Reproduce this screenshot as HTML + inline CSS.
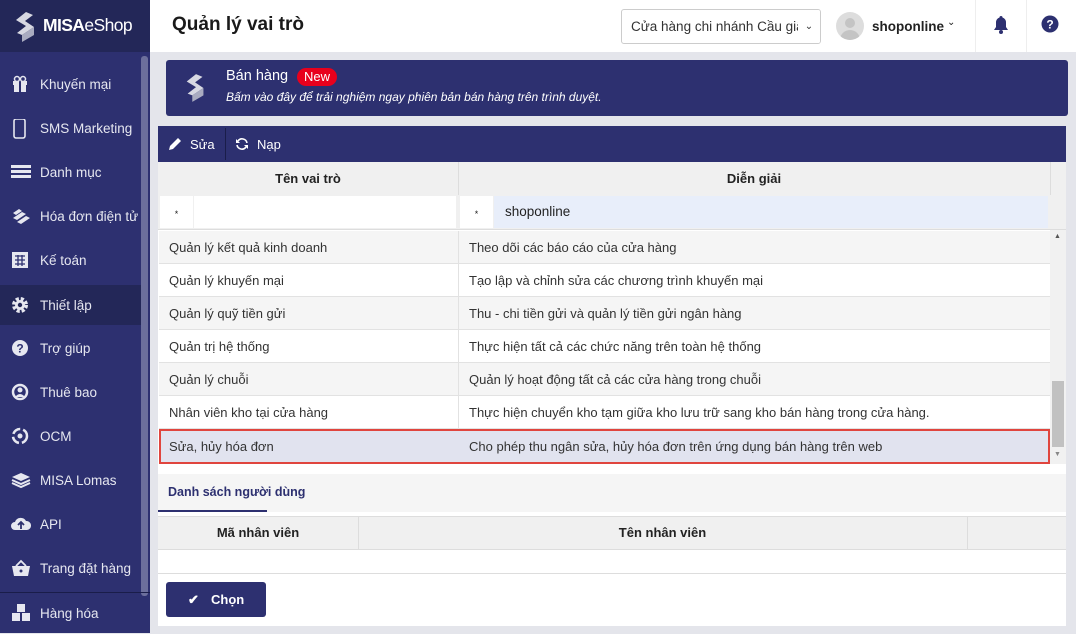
<!DOCTYPE html>
<html><head><meta charset="utf-8"><style>
*{box-sizing:border-box;margin:0;padding:0}
body{width:1076px;height:633px;overflow:hidden;font-family:"Liberation Sans",sans-serif;font-size:13px;color:#222;background:#e4e5eb;position:relative}
.abs{position:absolute}
#side{left:0;top:0;width:150px;height:633px;background:#2d3070}
#logo{left:0;top:0;width:150px;height:52px;background:#232758}
.mi{position:absolute;left:0;width:141px;height:40px;color:#e6e7f0;font-size:13.5px;line-height:41px;padding-left:40px}
.mi svg{position:absolute;left:11px;top:11px}
#hdr{left:150px;top:0;width:926px;height:52px;background:#fff}
.row{position:absolute;left:159px;width:891px;height:33px;border-bottom:1px solid #e2e2e2;font-size:13px;line-height:34px;color:#333}
.row span{position:absolute;left:10px}
.row b{position:absolute;left:310px;font-weight:normal}
.row i{position:absolute;left:299px;top:0;height:33px;border-left:1px solid #e2e2e2}
</style></head><body>
<div id="side" class="abs">
 <div id="logo" class="abs">
  <svg class="abs" style="left:12px;top:11px" width="28" height="32" viewBox="0 0 28 32"><path d="M14 1L4 9l10 6-9 7 5 2 12-8-9-6 8-6z" fill="#d7d8e2"/><path d="M10 24l12-8v8L10 31z" fill="#a9abc0"/></svg>
  <div class="abs" style="left:43px;top:15px;color:#fff;font-size:17.5px;letter-spacing:-0.6px"><b>MISA</b>eShop</div>
 </div>
 <div class="abs" style="left:141px;top:56px;width:7px;height:540px;background:#6c6f9c;border-radius:3px"></div>
 <div class="mi" style="top:64px"><svg width="18" height="18"><rect x="2" y="6" width="14" height="4" fill="#e6e7f0"/><rect x="3" y="10" width="12" height="7" fill="#e6e7f0"/><rect x="8" y="6" width="2" height="11" fill="#2d3070"/><circle cx="6" cy="4" r="2.5" fill="none" stroke="#e6e7f0" stroke-width="1.5"/><circle cx="12" cy="4" r="2.5" fill="none" stroke="#e6e7f0" stroke-width="1.5"/></svg>Khuyến mại</div>
 <div class="mi" style="top:108px"><svg width="18" height="20"><rect x="3" y="0" width="11" height="19" rx="2" fill="none" stroke="#e6e7f0" stroke-width="1.6"/></svg>SMS Marketing</div>
 <div class="mi" style="top:152px"><svg width="20" height="18"><rect x="0" y="2" width="20" height="3" fill="#e6e7f0"/><rect x="0" y="7" width="20" height="3" fill="#e6e7f0"/><rect x="0" y="12" width="20" height="3" fill="#e6e7f0"/></svg>Danh mục</div>
 <div class="mi" style="top:196px"><svg width="20" height="18"><path d="M2 6l6-4 3 2-6 4zM2 11l9-6 4 2-9 6zM6 15l9-6 4 2-9 6z" fill="#e6e7f0"/></svg>Hóa đơn điện tử</div>
 <div class="mi" style="top:240px"><svg width="18" height="18"><rect x="1" y="1" width="16" height="16" fill="#e6e7f0"/><path d="M4 5h10M4 9h10M4 13h10M7 4v11M11 4v11" stroke="#2d3070" stroke-width="1.3"/></svg>Kế toán</div>
 <div class="mi" style="top:285px;background:#232758;width:141px"><svg width="18" height="18"><circle cx="9" cy="9" r="6" fill="none" stroke="#e6e7f0" stroke-width="4" stroke-dasharray="3 1.8"/><circle cx="9" cy="9" r="5" fill="#e6e7f0"/><circle cx="9" cy="9" r="2.2" fill="#232758"/></svg>Thiết lập</div>
 <div class="mi" style="top:328px"><svg width="18" height="18"><circle cx="9" cy="9" r="8" fill="#e6e7f0"/><text x="9" y="13.5" font-size="12" font-weight="bold" text-anchor="middle" fill="#2d3070" font-family="Liberation Sans">?</text></svg>Trợ giúp</div>
 <div class="mi" style="top:372px"><svg width="18" height="18"><circle cx="9" cy="9" r="7" fill="none" stroke="#e6e7f0" stroke-width="2.5"/><circle cx="9" cy="7" r="2.5" fill="#e6e7f0"/><path d="M4 14q5-6 10 0" fill="#e6e7f0"/></svg>Thuê bao</div>
 <div class="mi" style="top:416px"><svg width="18" height="18"><circle cx="9" cy="9" r="7" fill="none" stroke="#e6e7f0" stroke-width="2.5" stroke-dasharray="9 3"/><circle cx="9" cy="9" r="2.5" fill="#e6e7f0"/></svg>OCM</div>
 <div class="mi" style="top:460px"><svg width="20" height="18"><path d="M10 2l9 4-9 4-9-4z" fill="#e6e7f0"/><path d="M1 9l9 4 9-4M1 12l9 4 9-4" stroke="#e6e7f0" stroke-width="2" fill="none"/></svg>MISA Lomas</div>
 <div class="mi" style="top:504px"><svg width="20" height="18"><path d="M4 15a4 4 0 010-8 6 6 0 0111-1 4.5 4.5 0 011 9z" fill="#e6e7f0"/><path d="M10 14V8M7 10l3-3 3 3" stroke="#2d3070" stroke-width="1.8" fill="none"/></svg>API</div>
 <div class="mi" style="top:548px"><svg width="20" height="18"><path d="M1 7h18l-2 10H3z" fill="#e6e7f0"/><path d="M5 7l5-5 5 5" stroke="#e6e7f0" stroke-width="1.8" fill="none"/><circle cx="10" cy="12" r="1.5" fill="#2d3070"/></svg>Trang đặt hàng</div>
 <div class="abs" style="left:0;top:592px;width:150px;height:1px;background:#1a1d4a"></div>
 <div class="mi" style="top:593px"><svg width="20" height="18"><rect x="6" y="0" width="8" height="8" fill="#e6e7f0"/><rect x="1" y="9" width="8" height="8" fill="#e6e7f0"/><rect x="11" y="9" width="8" height="8" fill="#e6e7f0"/></svg>Hàng hóa</div>
</div>
<div id="hdr" class="abs">
 <div class="abs" style="left:22px;top:14px;font-size:19px;font-weight:bold;color:#1a1a1a">Quản lý vai trò</div>
 <div class="abs" style="left:471px;top:9px;width:200px;height:35px;border:1px solid #ccc;border-radius:3px;font-size:13.5px;line-height:33px;padding-left:9px;color:#333;overflow:hidden;white-space:nowrap">Cửa hàng chi nhánh Cầu giấy<span class="abs" style="right:0;top:0;width:22px;height:33px;background:#fff;text-align:center;font-size:10px">&#8964;</span></div>
 <div class="abs" style="left:686px;top:12px;width:28px;height:28px;border-radius:50%;background:#ddd;overflow:hidden"><div class="abs" style="left:9px;top:6px;width:10px;height:10px;border-radius:50%;background:#c4c4c4"></div><div class="abs" style="left:4px;top:18px;width:20px;height:14px;border-radius:10px 10px 0 0;background:#c4c4c4"></div></div>
 <div class="abs" style="left:722px;top:19px;font-weight:bold;font-size:13.5px">shoponline</div>
 <div class="abs" style="left:797px;top:17px;font-size:10px">&#8964;</div>
 <div class="abs" style="left:825px;top:0;width:1px;height:52px;background:#eee"></div>
 <div class="abs" style="left:876px;top:0;width:1px;height:52px;background:#eee"></div>
 <svg class="abs" style="left:842px;top:15px" width="18" height="20"><path d="M9 1a1.5 1.5 0 011.5 1.5 5 5 0 013.5 5V12l2 3H2l2-3V7.5a5 5 0 013.5-5A1.5 1.5 0 019 1z" fill="#2d3070"/><circle cx="9" cy="17" r="2" fill="#2d3070"/></svg>
 <svg class="abs" style="left:891px;top:15px" width="18" height="18"><circle cx="9" cy="9" r="8.5" fill="#2d3070"/><text x="9" y="13.5" font-size="12" font-weight="bold" text-anchor="middle" fill="#fff" font-family="Liberation Sans">?</text></svg>
</div>
<div class="abs" style="left:166px;top:60px;width:902px;height:56px;background:#2d3070;border-radius:3px">
 <svg class="abs" style="left:17px;top:12px" width="26" height="32" viewBox="0 0 28 32"><path d="M14 1L4 9l10 6-9 7 5 2 12-8-9-6 8-6z" fill="#d7d8e2"/><path d="M10 24l12-8v8L10 31z" fill="#a9abc0"/></svg>
 <div class="abs" style="left:60px;top:8px;color:#fff;font-size:14.5px">Bán hàng</div>
 <div class="abs" style="left:131px;top:8px;height:18px;padding:0 7px;background:#e8001c;color:#fff;border-radius:9px;font-size:13px;line-height:18px">New</div>
 <div class="abs" style="left:60px;top:30px;color:#fff;font-size:12px;font-style:italic">Bấm vào đây để trải nghiệm ngay phiên bản bán hàng trên trình duyệt.</div>
</div>
<div class="abs" style="left:158px;top:126px;width:908px;height:500px;background:#fff"></div>
<div class="abs" style="left:158px;top:126px;width:908px;height:36px;background:#2d3070;color:#fff;font-size:13px">
 <svg class="abs" style="left:10px;top:11px" width="14" height="14"><path d="M1 13l1-4 8-8 3 3-8 8z" fill="#fff"/></svg>
 <div class="abs" style="left:32px;top:11px">Sửa</div>
 <div class="abs" style="left:67px;top:2px;width:1px;height:32px;background:#1a1d4a"></div>
 <svg class="abs" style="left:77px;top:11px" width="14" height="14"><path d="M12 6A5 5 0 003 4M2 8a5 5 0 009 2" stroke="#fff" stroke-width="1.6" fill="none"/><path d="M1 2v4h4M13 12V8H9" fill="#fff"/></svg>
 <div class="abs" style="left:99px;top:11px">Nạp</div>
</div>
<div class="abs" style="left:158px;top:162px;width:908px;height:68px;background:#f0f0f0;border-bottom:1px solid #ddd"></div>
<div class="abs" style="left:458px;top:162px;width:1px;height:33px;background:#ddd"></div>
<div class="abs" style="left:1050px;top:162px;width:1px;height:33px;background:#ddd"></div>
<div class="abs" style="left:158px;top:171px;width:300px;text-align:center;font-weight:bold;font-size:13px">Tên vai trò</div>
<div class="abs" style="left:458px;top:171px;width:592px;text-align:center;font-weight:bold;font-size:13px">Diễn giải</div>
<div class="abs" style="left:160px;top:196px;width:33px;height:32px;background:#fff;text-align:center;line-height:36px;font-size:9px">*</div>
<div class="abs" style="left:194px;top:196px;width:262px;height:32px;background:#fff"></div>
<div class="abs" style="left:460px;top:196px;width:33px;height:32px;background:#fff;text-align:center;line-height:36px;font-size:9px">*</div>
<div class="abs" style="left:494px;top:196px;width:554px;height:32px;background:#e8eefa;line-height:32px;padding-left:11px;font-size:13.5px">shoponline</div>
<div class="row" style="top:231px;background:#f5f5f5"><span>Quản lý kết quả kinh doanh</span><i></i><b>Theo dõi các báo cáo của cửa hàng</b></div>
<div class="row" style="top:264px;background:#fff"><span>Quản lý khuyến mại</span><i></i><b>Tạo lập và chỉnh sửa các chương trình khuyến mại</b></div>
<div class="row" style="top:297px;background:#f5f5f5"><span>Quản lý quỹ tiền gửi</span><i></i><b>Thu - chi tiền gửi và quản lý tiền gửi ngân hàng</b></div>
<div class="row" style="top:330px;background:#fff"><span>Quản trị hệ thống</span><i></i><b>Thực hiện tất cả các chức năng trên toàn hệ thống</b></div>
<div class="row" style="top:363px;background:#f5f5f5"><span>Quản lý chuỗi</span><i></i><b>Quản lý hoạt động tất cả các cửa hàng trong chuỗi</b></div>
<div class="row" style="top:396px;background:#fff"><span>Nhân viên kho tại cửa hàng</span><i></i><b>Thực hiện chuyển kho tạm giữa kho lưu trữ sang kho bán hàng trong cửa hàng.</b></div>
<div class="row" style="top:429px;background:#e1e3ef;border:2px solid #e0453e;height:35px;left:159px;width:891px;line-height:32px"><span style="left:8px">Sửa, hủy hóa đơn</span><b style="left:308px">Cho phép thu ngân sửa, hủy hóa đơn trên ứng dụng bán hàng trên web</b></div>
<div class="abs" style="left:1050px;top:230px;width:16px;height:234px;background:#f1f1f1"></div>
<div class="abs" style="left:1052px;top:381px;width:12px;height:66px;background:#c1c1c1"></div>
<div class="abs" style="left:1054px;top:233px;font-size:7px;color:#555">&#9650;</div>
<div class="abs" style="left:1054px;top:451px;font-size:7px;color:#888">&#9660;</div>
<div class="abs" style="left:158px;top:474px;width:908px;height:38px;background:#f5f5f5"></div>
<div class="abs" style="left:168px;top:485px;font-size:12.5px;font-weight:bold;color:#2d3070">Danh sách người dùng</div>
<div class="abs" style="left:158px;top:510px;width:109px;height:2px;background:#2d3070"></div>
<div class="abs" style="left:158px;top:516px;width:908px;height:34px;background:#f0f0f0;border-top:1px solid #ddd;border-bottom:1px solid #ddd"></div>
<div class="abs" style="left:358px;top:517px;width:1px;height:32px;background:#ddd"></div>
<div class="abs" style="left:967px;top:517px;width:1px;height:32px;background:#ddd"></div>
<div class="abs" style="left:158px;top:525px;width:200px;text-align:center;font-weight:bold">Mã nhân viên</div>
<div class="abs" style="left:358px;top:525px;width:609px;text-align:center;font-weight:bold">Tên nhân viên</div>
<div class="abs" style="left:158px;top:573px;width:908px;height:1px;background:#ddd"></div>
<div class="abs" style="left:166px;top:582px;width:100px;height:35px;background:#2d3070;border-radius:3px;color:#fff;font-weight:bold;line-height:35px">
 <span class="abs" style="left:22px;top:0">&#10004;</span><span class="abs" style="left:45px;top:0">Chọn</span></div>
</body></html>
